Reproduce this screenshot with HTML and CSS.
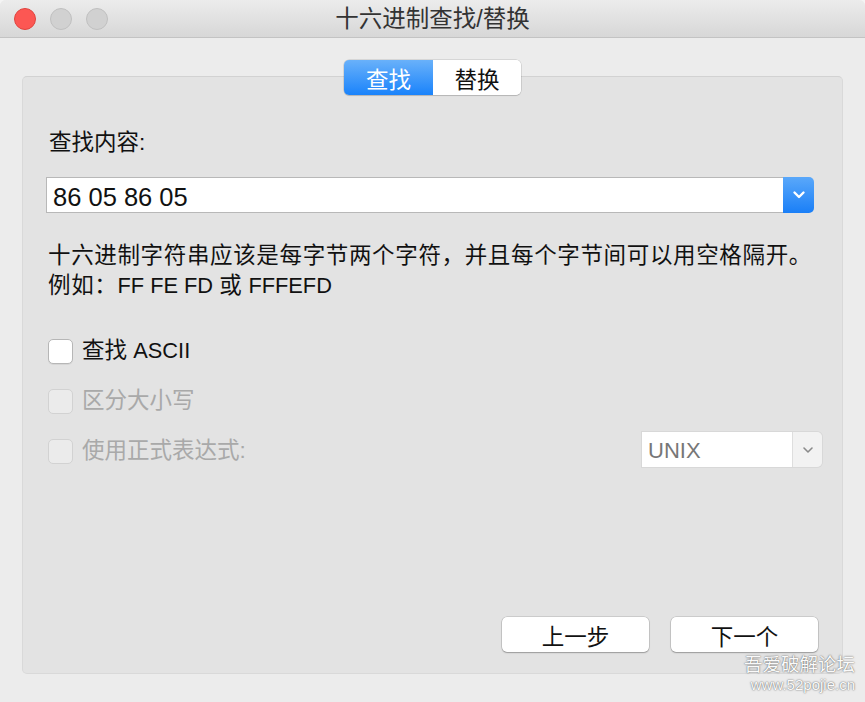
FILE: index.html
```html
<!DOCTYPE html>
<html lang="zh-CN">
<head>
<meta charset="utf-8">
<title>十六进制查找/替换</title>
<link rel="stylesheet" href="styles.css">
</head>
<body>
<div class="window">
  <div class="titlebar">
    <div class="lights">
      <span class="light red"></span>
      <span class="light gray"></span>
      <span class="light gray"></span>
    </div>
    <div class="title">十六进制查找/替换</div>
    <div></div>
  </div>
  <div class="content">
    <div class="box">
      <div class="tabs">
        <div class="tab active">查找</div>
        <div class="tab">替换</div>
      </div>
      <div class="label">查找内容:</div>
      <div class="combo">
        <div class="combo-field">86 05 86 05</div>
        <div class="combo-btn">
          <svg width="14" height="10" viewBox="0 0 14 10"><path d="M2.5 2.5 L7 7 L11.5 2.5" fill="none" stroke="#fff" stroke-width="2.4" stroke-linecap="round" stroke-linejoin="round"/></svg>
        </div>
      </div>
      <div class="help">
        <div>十六进制字符串应该是每字节两个字符，并且每个字节间可以用空格隔开。</div>
        <div>例如：<span class="latin">FF FE FD </span>或<span class="latin"> FFFEFD</span></div>
      </div>
      <div class="options">
        <div class="row">
          <span class="check"></span>
          <span class="opt">查找 <span class="latin">ASCII</span></span>
        </div>
        <div class="row disabled">
          <span class="check"></span>
          <span class="opt">区分大小写</span>
        </div>
        <div class="row disabled">
          <span class="check"></span>
          <span class="opt">使用正式表达式:</span>
          <div class="unix">
            <div class="unix-field">UNIX</div>
            <div class="unix-btn">
              <svg width="12" height="8" viewBox="0 0 12 8"><path d="M2 2 L6 6 L10 2" fill="none" stroke="#8a8a8a" stroke-width="1.6" stroke-linecap="round" stroke-linejoin="round"/></svg>
            </div>
          </div>
        </div>
      </div>
      <div class="buttons">
        <div class="btn prev">上一步</div>
        <div class="btn next">下一个</div>
      </div>
    </div>
  </div>
  <div class="watermark">
    <div class="wm-cn">吾爱破解论坛</div>
    <div class="wm-en">www.52pojie.cn</div>
  </div>
</div>
</body>
</html>
```

FILE: styles.css
```css
* { box-sizing: border-box; }
html, body {
  margin: 0;
  padding: 0;
  background: #f4f4f4;
}
body {
  font-family: "Liberation Sans", "Noto Sans CJK SC", sans-serif;
  color: #1c1c1c;
}
.window {
  position: relative;
  width: 865px;
  height: 702px;
  background: #ececec;
  border-radius: 6px 6px 0 0;
  overflow: hidden;
  display: flex;
  flex-direction: column;
}
.titlebar {
  height: 38px;
  flex: none;
  display: grid;
  grid-template-columns: 1fr auto 1fr;
  align-items: center;
  background: linear-gradient(#ececec, #d7d7d7);
  border-bottom: 1px solid #c3c3c3;
}
.lights {
  display: flex;
  gap: 14px;
  padding-left: 14px;
  padding-top: 1px;
}
.light {
  width: 22px;
  height: 22px;
  border-radius: 50%;
}
.light.red {
  background: #fc5753;
  border: 1px solid #e0443e;
}
.light.gray {
  background: #d1d1d1;
  border: 1px solid #c0c0c0;
}
.title {
  font-size: 23.5px;
  line-height: 30px;
  color: #333;
  padding-top: 1px;
}
.content {
  flex: 1;
  padding: 38px 22px 28px 22px;
  display: flex;
}
.box {
  flex: 1;
  min-width: 0;
  background: #e3e3e3;
  border: 1px solid #d9d9d9;
  border-top-color: #d2d2d2;
  border-radius: 5px;
  display: flex;
  flex-direction: column;
  padding: 0 28px 21px 23px;
}
.tabs {
  align-self: center;
  margin-top: -17px;
  margin-left: 5px;
  display: flex;
  height: 35px;
  border-radius: 5px;
  box-shadow: 0 0 0 0.5px rgba(0,0,0,0.18), 0 1px 1px rgba(0,0,0,0.12);
  overflow: hidden;
}
.tab {
  width: 88px;
  display: flex;
  align-items: center;
  justify-content: center;
  font-size: 22.5px;
  background: #fff;
  color: #111;
}
.tab.active {
  width: 89px;
  background: linear-gradient(#69b1fa, #1a83fb);
  color: #fff;
}
.label {
  margin-top: 33px;
  margin-left: 3px;
  font-size: 22.5px;
  line-height: 30px;
  color: #111;
}
.combo {
  margin-top: 19px;
  height: 36px;
  display: flex;
}
.combo-field {
  flex: 1;
  background: #fff;
  border: 1px solid #b8b8b8;
  border-right: none;
  font-size: 25.5px;
  line-height: 34px;
  padding-left: 6px;
  padding-top: 2px;
  color: #111;
}
.combo-btn {
  width: 31px;
  background: linear-gradient(#5aa8fa, #1a7ff7);
  border-radius: 0 5px 5px 0;
  display: flex;
  align-items: center;
  justify-content: center;
}
.help {
  margin-top: 28px;
  margin-left: 2px;
  min-width: 0;
  font-size: 22.5px;
  line-height: 30px;
  letter-spacing: 0.65px;
  white-space: nowrap;
  color: #111;
}
.latin {
  font-size: 21.8px;
  letter-spacing: 0;
}
.options {
  margin-top: 25px;
  display: flex;
  flex-direction: column;
}
.row {
  height: 50px;
  display: flex;
  align-items: center;
  font-size: 22.5px;
  color: #111;
}
.check {
  width: 25px;
  height: 25px;
  margin-left: 2px;
  border-radius: 5px;
  background: #fff;
  border: 1px solid #b6b6b6;
  box-shadow: 0 1px 0 rgba(0,0,0,0.06);
}
.opt {
  margin-left: 9px;
  line-height: 30px;
  white-space: nowrap;
}
.row.disabled .check {
  background: #ebebeb;
  border-color: #d2d2d2;
  box-shadow: none;
}
.row.disabled .opt {
  color: #a9a9a9;
}
.unix {
  margin-left: auto;
  margin-right: -8px;
  margin-top: -3px;
  width: 180px;
  height: 35px;
  display: flex;
  border-radius: 0 5px 5px 0;
  box-shadow: 0 0 0 1px #d8d8d8;
}
.unix-field {
  flex: 1;
  background: #fff;
  font-size: 22px;
  line-height: 35px;
  padding-left: 6px;
  padding-top: 1px;
  color: #777;
}
.unix-btn {
  width: 30px;
  background: #f2f2f2;
  border-left: 1px solid #dedede;
  border-radius: 0 5px 5px 0;
  display: flex;
  align-items: center;
  justify-content: center;
}
.buttons {
  margin-top: auto;
  display: flex;
  justify-content: flex-end;
  gap: 22px;
  margin-right: -4px;
}
.btn {
  width: 147px;
  height: 35px;
  background: #fff;
  border-radius: 5px;
  box-shadow: 0 0 0 0.5px rgba(0,0,0,0.2), 0 1px 1.5px rgba(0,0,0,0.25);
  display: flex;
  align-items: center;
  justify-content: center;
  font-size: 22.5px;
  color: #111;
}
.watermark {
  position: absolute;
  right: 10px;
  bottom: 8px;
  display: flex;
  flex-direction: column;
  align-items: flex-end;
  color: #fafafa;
  text-shadow: 0 0 2px rgba(0,0,0,0.5), 0 0 1px rgba(0,0,0,0.35);
}
.wm-cn {
  font-size: 18.5px;
  line-height: 22px;
}
.wm-en {
  font-size: 15px;
  line-height: 18px;
}
```
